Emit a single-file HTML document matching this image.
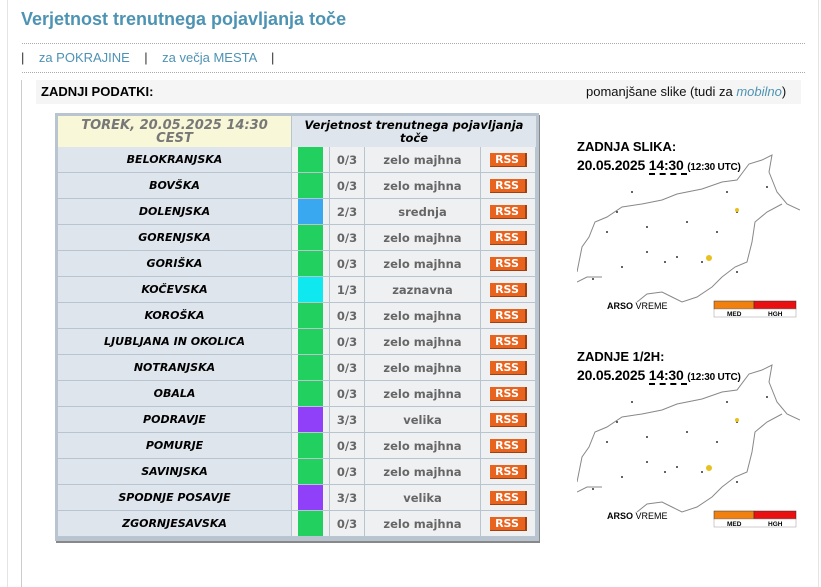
<!DOCTYPE html>
<html><head><meta charset="utf-8"><style>
body{margin:0;width:821px;height:587px;background:#fff;position:relative;overflow:hidden;font-family:"Liberation Sans",sans-serif}
.a{position:absolute}
.dot{position:absolute;left:22px;width:783px;border-top:1px dotted #aaa;height:0}
.cell{position:absolute;display:flex;align-items:center;justify-content:center;box-sizing:border-box;font-family:"DejaVu Sans",sans-serif;font-weight:bold;font-size:11.5px}
.nm{background:#dfe5ec;color:#000;font-style:italic;font-size:11px;border-bottom:1px solid #b8c4d0;border-right:1px solid #b8c4d0}
.sc{background:#eef0f2;color:#666;border-bottom:1px solid #b8c4d0;border-right:1px solid #b8c4d0}
.rss{background:#e8641e;color:#fff;font-size:11px;width:35px;height:13px;display:flex;align-items:center;justify-content:center;border-right:2px solid #a04010;border-bottom:1px solid #a04010}
</style></head><body>
<div class="a" style="left:7px;top:0;width:1px;height:587px;background:#e4e4e4"></div>
<div class="a" style="left:21px;top:80px;width:1px;height:507px;background:#ccc"></div>
<div class="a" style="left:818px;top:0;width:1px;height:587px;background:#e4e4e4"></div>
<div class="a" style="left:21px;top:9px;font-size:18px;font-weight:bold;color:#4d93b3">Verjetnost trenutnega pojavljanja toče</div>
<div class="dot" style="top:43px"></div>
<div class="a" style="left:21px;top:50px;font-size:13px;color:#333;white-space:pre">|    <span style="color:#4d93b3">za POKRAJINE</span>    |    <span style="color:#4d93b3">za večja MESTA</span>    |</div>
<div class="dot" style="top:72px"></div>
<div class="a" style="left:36px;top:80px;width:765px;height:24px;background:#f5f5f5"></div>
<div class="a" style="left:41px;top:84px;font-size:13px;font-weight:bold">ZADNJI PODATKI:</div>
<div class="a" style="left:586px;top:84px;font-size:13px;color:#111">pomanjšane slike (tudi za <i style="color:#4d93b3">mobilno</i>)</div>

<div class="a" style="left:55px;top:113px;width:484px;height:428px;background:#b8c4d0;box-shadow:1px 2px 0 #888"></div>
<div class="cell" style="left:58px;top:116px;width:233px;height:31px;background:#f8f8d8;color:#777;font-style:italic;font-size:13px;line-height:13px;text-align:center">TOREK, 20.05.2025 14:30<br>CEST</div>
<div class="cell" style="left:292px;top:116px;width:244px;height:31px;background:#dfe5ec;color:#000;font-style:italic;font-size:11.5px;line-height:13px;text-align:center">Verjetnost trenutnega pojavljanja<br>toče</div>
<div id="rows"></div>

<div class="a" style="left:577px;top:139px;font-size:13px;font-weight:bold">ZADNJA SLIKA:</div>
<div class="a" style="left:577px;top:157px;font-size:14px;font-weight:bold;letter-spacing:-0.2px">20.05.2025 <span style="border-bottom:2px dashed #000">14:30 </span><span style="font-size:10px">(12:30 UTC)</span></div>
<div class="a" style="left:577px;top:349px;font-size:13px;font-weight:bold">ZADNJE 1/2H:</div>
<div class="a" style="left:577px;top:367px;font-size:14px;font-weight:bold;letter-spacing:-0.2px">20.05.2025 <span style="border-bottom:2px dashed #000">14:30 </span><span style="font-size:10px">(12:30 UTC)</span></div>

<svg class="a" style="left:577px;top:152px" width="223" height="170" id="m1">
<path d="M0,120 L5,95 L12,85 L18,70 L30,65 L45,55 L65,52 L85,48 L100,42 L125,37 L145,30 L160,28 L172,12 L185,8 L195,3 L192,20 L200,40 L210,52 L223,58 M205,52 L190,60 L178,70 L175,90 L170,110 L158,115 L145,125 L135,135 L120,145 L105,150 L95,145 L85,140 L70,142 L60,150 M0,130 L10,125 L25,125" fill="none" stroke="#888" stroke-width="1"/>
<g fill="#333"><circle cx="40" cy="60" r="1"/><circle cx="70" cy="75" r="1"/><circle cx="110" cy="70" r="1"/><circle cx="140" cy="80" r="1"/><circle cx="70" cy="100" r="1"/><circle cx="100" cy="105" r="1"/><circle cx="45" cy="115" r="1"/><circle cx="160" cy="120" r="1"/><circle cx="190" cy="35" r="1"/><circle cx="150" cy="40" r="1"/><circle cx="125" cy="110" r="1"/><circle cx="30" cy="80" r="1"/><circle cx="88" cy="110" r="1"/><circle cx="55" cy="40" r="1"/><circle cx="16" cy="127" r="1"/><circle cx="160" cy="60" r="1"/></g>
<circle cx="160" cy="58" r="2" fill="#e8c020"/><circle cx="132" cy="106" r="3" fill="#e8c020"/>
<text x="30" y="157" font-size="9" font-weight="bold" font-family="Liberation Sans">ARSO <tspan font-weight="normal">VREME</tspan></text>
<rect x="137" y="149" width="40" height="8" fill="#f08010" stroke="#333" stroke-width=".5"/><rect x="177" y="149" width="42" height="8" fill="#e81010" stroke="#333" stroke-width=".5"/>
<rect x="137" y="157" width="82" height="8" fill="#fff" stroke="#999" stroke-width=".5"/>
<text x="150" y="164" font-size="6.5" font-weight="bold" font-family="Liberation Sans">MED</text><text x="191" y="164" font-size="6.5" font-weight="bold" font-family="Liberation Sans">HGH</text>
</svg>
<script>
var m=document.getElementById('m1');var c=m.cloneNode(true);c.style.top='362px';document.body.appendChild(c);
var d=[["BELOKRANJSKA","#22d060","0/3","zelo majhna"],["BOVŠKA","#22d060","0/3","zelo majhna"],["DOLENJSKA","#3aa8f0","2/3","srednja"],["GORENJSKA","#22d060","0/3","zelo majhna"],["GORIŠKA","#22d060","0/3","zelo majhna"],["KOČEVSKA","#10e8f0","1/3","zaznavna"],["KOROŠKA","#22d060","0/3","zelo majhna"],["LJUBLJANA IN OKOLICA","#22d060","0/3","zelo majhna"],["NOTRANJSKA","#22d060","0/3","zelo majhna"],["OBALA","#22d060","0/3","zelo majhna"],["PODRAVJE","#9040f8","3/3","velika"],["POMURJE","#22d060","0/3","zelo majhna"],["SAVINJSKA","#22d060","0/3","zelo majhna"],["SPODNJE POSAVJE","#9040f8","3/3","velika"],["ZGORNJESAVSKA","#22d060","0/3","zelo majhna"]];
var h='';d.forEach(function(r,i){var t=147+i*26;
h+='<div class="cell nm" style="left:58px;top:'+t+'px;width:234px;height:26px">'+r[0]+'</div>';
h+='<div class="cell sc" style="left:292px;top:'+t+'px;width:38px;height:26px"></div>';
h+='<div class="a" style="left:298px;top:'+t+'px;width:25px;height:25px;background:'+r[1]+'"></div>';
h+='<div class="cell sc" style="left:330px;top:'+t+'px;width:35px;height:26px">'+r[2]+'</div>';
h+='<div class="cell sc" style="left:365px;top:'+t+'px;width:116px;height:26px">'+r[3]+'</div>';
h+='<div class="cell sc" style="left:481px;top:'+t+'px;width:55px;height:26px"><div class="rss">RSS</div></div>';});
document.getElementById('rows').innerHTML=h;
</script>
</body></html>
